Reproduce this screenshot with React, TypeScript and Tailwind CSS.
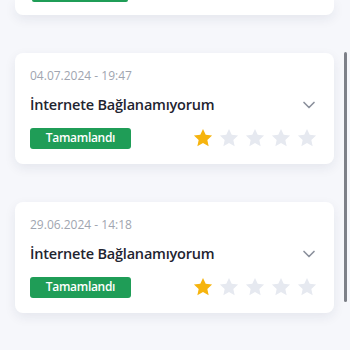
import { ChevronDown } from "lucide-react";

const tickets = [
  { date: "04.07.2024 - 19:47", title: "İnternete Bağlanamıyorum", rating: 1 },
  { date: "29.06.2024 - 14:18", title: "İnternete Bağlanamıyorum", rating: 1 },
];

function Star({ filled }: { readonly filled: boolean }) {
  return (
    <svg viewBox="0 0 24 24" className="h-[22px] w-[22px]" aria-hidden="true">
      <path
        d="M12 2.2l2.95 6.36 6.95.78-5.17 4.72 1.43 6.86L12 17.45l-6.16 3.47 1.43-6.86L2.1 9.34l6.95-.78L12 2.2z"
        fill={filled ? "#f6b40e" : "#e6e9f0"}
      />
    </svg>
  );
}

function TicketCard({ date, title, rating }: { readonly date: string; readonly title: string; readonly rating: number }) {
  return (
    <article className="rounded-[8px] bg-white px-[15px] pb-[15px] pt-[13px] shadow-[0_4px_12px_rgba(30,40,80,0.08)]">
      <p className="text-[12px] leading-[20px] text-[#a0a5b0]">{date}</p>
      <div className="mt-[7px] flex items-center justify-between">
        <h3 className="text-[14.5px] font-semibold leading-[24px] tracking-[-0.2px] text-[#1f2430]">{title}</h3>
        <ChevronDown className="h-[20px] w-[20px] text-[#8b909c]" strokeWidth={2} />
      </div>
      <div className="mt-[10px] flex items-center justify-between">
        <span className="flex h-[21px] w-[101px] items-center justify-center rounded-[3px] bg-[#1f9d57] text-[12px] font-semibold tracking-[-0.3px] text-white">
          Tamamlandı
        </span>
        <div className="flex items-center gap-[4px] pr-[1px]">
          {[1, 2, 3, 4, 5].map((n) => (
            <Star key={n} filled={n <= rating} />
          ))}
        </div>
      </div>
    </article>
  );
}

export default function App() {
  return (
    <div className="relative h-[350px] w-[350px] overflow-hidden bg-[#f6f7fb] font-['Open_Sans',sans-serif]">
      <div className="flex w-[334px] flex-col gap-[38px] pl-[15px]">
        <div className="h-[15px] rounded-b-[8px] bg-white px-[17px] shadow-[0_4px_12px_rgba(30,40,80,0.08)]">
          <div className="h-[2px] w-[96px] rounded-b-[3px] bg-[#1f9d57]" />
        </div>
        {tickets.map((t, i) => (
          <TicketCard key={i} {...t} />
        ))}
      </div>
      <div className="absolute left-[344px] top-[52px] h-[250px] w-[3px] rounded-full bg-[#7d8088]" />
    </div>
  );
}
